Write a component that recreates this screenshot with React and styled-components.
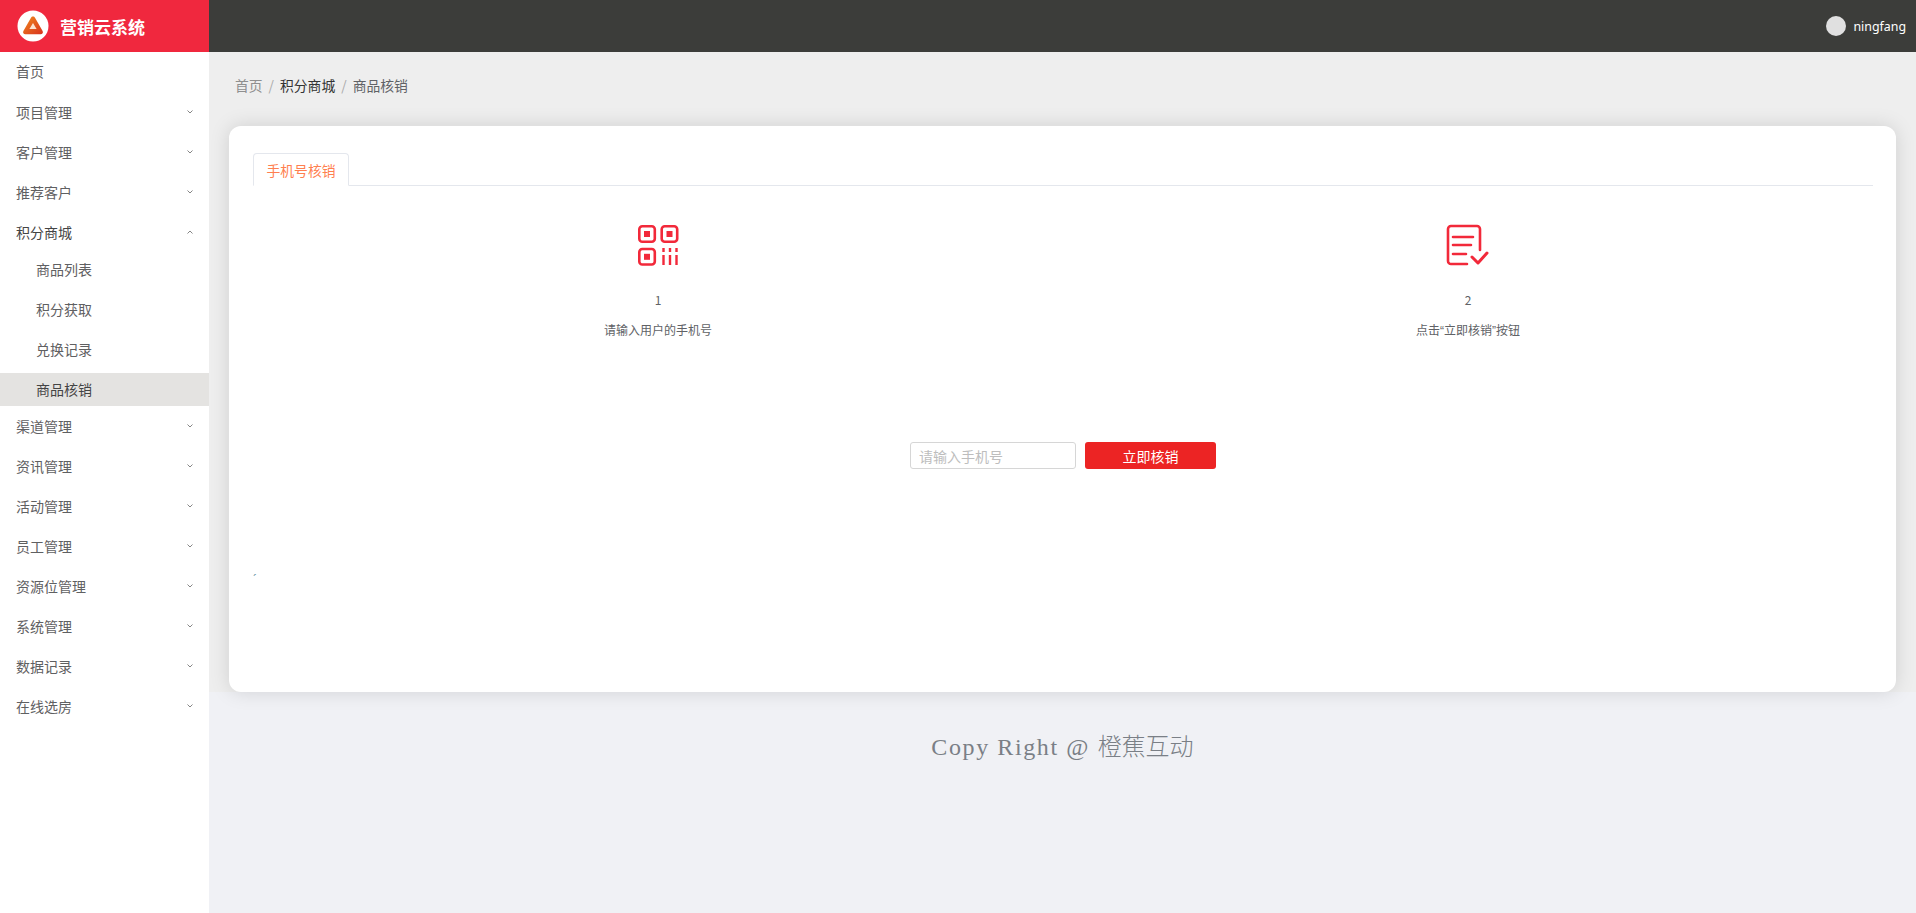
import styled, { createGlobalStyle } from "styled-components"

const GlobalStyle = createGlobalStyle`
    html, body {
        margin: 0;
        padding: 0;
        height: 100%;
        overflow: hidden;
        background: #f0f1f5;
        font-family: "Noto Sans CJK SC", "Noto Sans", sans-serif;
    }
`

const menus = [
    { label: "首页", plain: true },
    { label: "项目管理" },
    { label: "客户管理" },
    { label: "推荐客户" },
    {
        label: "积分商城",
        open: true,
        children: ["商品列表", "积分获取", "兑换记录", "商品核销"],
    },
    { label: "渠道管理" },
    { label: "资讯管理" },
    { label: "活动管理" },
    { label: "员工管理" },
    { label: "资源位管理" },
    { label: "系统管理" },
    { label: "数据记录" },
    { label: "在线选房" },
]

function Chevron({ up }) {
    return (
        <ChevronIcon viewBox="0 0 6 4">
            <polyline points={up ? "0.5,3.5 3,1 5.5,3.5" : "0.5,0.5 3,3 5.5,0.5"} />
        </ChevronIcon>
    )
}

function Logo() {
    return (
        <LogoMark viewBox="0 0 32 32">
            <defs>
                <linearGradient id="logoFill" x1="0" y1="0" x2="1" y2="1">
                    <stop offset="0" stopColor="#f08a1d" />
                    <stop offset="1" stopColor="#d8321f" />
                </linearGradient>
            </defs>
            <circle cx="16" cy="16" r="15.5" fill="#fff" />
            <path
                d="M16 6.5c.9 0 1.6.5 2 1.2l7.6 13.2c.9 1.6-.2 3.4-2 3.4H8.4c-1.8 0-2.9-1.8-2-3.4L14 7.700c.4-.7 1.100-1.200 2-1.200z"
                fill="url(#logoFill)"
            />
            <path d="M16 13l3.600 6h-7.200z" fill="#fbe3cf" />
        </LogoMark>
    )
}

function QrIcon() {
    return (
        <StepIcon viewBox="0 0 41 41">
            <rect x="1.300" y="1.300" width="15.500" height="15.500" rx="3" />
            <rect x="23.700" y="1.300" width="15.500" height="15.500" rx="3" />
            <rect x="1.300" y="24" width="15.500" height="15.500" rx="3" />
            <Solid x="6" y="6" width="6" height="6" />
            <Solid x="28.500" y="6" width="6" height="6" />
            <Solid x="6" y="28.800" width="6" height="6" />
            <BarPath d="M25.500 23v4M25.500 30v10M32 23v4M32 30v10M38.500 23v4M38.500 30v10" />
        </StepIcon>
    )
}

function CheckDocIcon() {
    return (
        <DocIcon viewBox="0 0 41 41">
            <path d="M20 39H4a3 3 0 0 1-3-3V4a3 3 0 0 1 3-3h26a3 3 0 0 1 3 3v21" />
            <path d="M6 12h20M6 20h18M6 29h13" />
            <CheckPath d="M25 32l6 6 9-10" />
        </DocIcon>
    )
}

function App() {
    return (
        <>
            <GlobalStyle />
            <Page>
                <TopBar>
                    <Brand>
                        <Logo />
                        <BrandName>营销云系统</BrandName>
                    </Brand>
                    <User>
                        <Avatar />
                        <UserName>ningfang</UserName>
                    </User>
                </TopBar>
                <Body>
                    <Sidebar>
                        {menus.map((menu) => (
                            <div key={menu.label}>
                                <MenuRow $plain={menu.plain} $open={menu.open}>
                                    {menu.label}
                                    {!menu.plain && <Chevron up={menu.open} />}
                                </MenuRow>
                                {menu.children &&
                                    menu.children.map((child) => (
                                        <SubRow key={child} $active={child === "商品核销"}>
                                            {child}
                                        </SubRow>
                                    ))}
                            </div>
                        ))}
                    </Sidebar>
                    <Main>
                        <Content>
                            <Breadcrumb>
                                <Crumb $color="#8f8f8f">首页</Crumb>
                                <Slash>/</Slash>
                                <Crumb $color="#333">积分商城</Crumb>
                                <Slash>/</Slash>
                                <Crumb $color="#606266">商品核销</Crumb>
                            </Breadcrumb>
                            <Card>
                                <TabBar>
                                    <Tab>手机号核销</Tab>
                                </TabBar>
                                <Steps>
                                    <Step>
                                        <QrIcon />
                                        <StepNum>1</StepNum>
                                        <StepText>请输入用户的手机号</StepText>
                                    </Step>
                                    <Step>
                                        <CheckDocIcon />
                                        <StepNum>2</StepNum>
                                        <StepText>点击“立即核销”按钮</StepText>
                                    </Step>
                                </Steps>
                                <VerifyRow>
                                    <PhoneInput placeholder="请输入手机号" />
                                    <VerifyButton>立即核销</VerifyButton>
                                </VerifyRow>
                                <Tick>´</Tick>
                            </Card>
                        </Content>
                        <Footer>
                            Copy Right @ <FooterCjk>橙蕉互动</FooterCjk>
                        </Footer>
                    </Main>
                </Body>
            </Page>
        </>
    )
}

const Page = styled.div`
    width: 1916px;
    height: 913px;
    display: flex;
    flex-direction: column;
`

const TopBar = styled.header`
    height: 52px;
    flex: none;
    display: flex;
    justify-content: space-between;
    align-items: center;
    background: #3c3d3a;
`

const Brand = styled.div`
    width: 209px;
    height: 100%;
    box-sizing: border-box;
    padding-left: 17px;
    display: flex;
    align-items: center;
    gap: 11px;
    background: #f0283e;
`

const LogoMark = styled.svg`
    width: 32px;
    height: 32px;
    flex: none;
`

const BrandName = styled.span`
    font-size: 17px;
    font-weight: 700;
    color: #fff;
`

const User = styled.div`
    display: flex;
    align-items: center;
    gap: 7px;
    padding-right: 10px;
`

const Avatar = styled.span`
    width: 20px;
    height: 20px;
    border-radius: 50%;
    background: #e0e0e0;
`

const UserName = styled.span`
    font-family: "Noto Sans", sans-serif;
    font-size: 12.4px;
    color: #fff;
`

const Body = styled.div`
    flex: 1;
    display: flex;
    min-height: 0;
`

const Sidebar = styled.nav`
    width: 209px;
    flex: none;
    background: #fff;
`

const MenuRow = styled.div`
    height: 40px;
    box-sizing: border-box;
    padding: ${(props) => (props.$plain ? "0 16px 2px" : "0 16px")};
    display: flex;
    align-items: center;
    justify-content: space-between;
    font-size: 14px;
    color: ${(props) => (props.$open ? "#444" : "#5f6062")};
`

const ChevronIcon = styled.svg`
    width: 6px;
    height: 4px;
    fill: none;
    stroke: #666;
    stroke-width: 0.8;
`

const SubRow = styled.div`
    height: 33px;
    margin-bottom: 7px;
    box-sizing: border-box;
    padding-left: 36px;
    display: flex;
    align-items: center;
    font-size: 14px;
    color: ${(props) => (props.$active ? "#444" : "#5f6062")};
    background: ${(props) => (props.$active ? "#e4e3e1" : "transparent")};

    &:last-child {
        margin: 8px 0 0;
        padding-bottom: 2px;
    }
`

const Main = styled.main`
    flex: 1;
    min-width: 0;
    display: flex;
    flex-direction: column;
`

const Content = styled.section`
    padding: 23px 20px 0;
    background: #eeeeee;
`

const Breadcrumb = styled.div`
    height: 20px;
    margin-bottom: 31px;
    padding-left: 6px;
    display: flex;
    align-items: center;
    font-size: 13.8px;
`

const Crumb = styled.span`
    color: ${(props) => props.$color};
`

const Slash = styled.span`
    margin: 0 6px;
    color: #aaa;
`

const Card = styled.div`
    position: relative;
    height: 566px;
    box-sizing: border-box;
    padding: 27px 23px 0 24px;
    background: #fff;
    border-radius: 12px;
    box-shadow: 0 0 20px rgba(0, 0, 0, 0.13);
`

const TabBar = styled.div`
    height: 33px;
    box-sizing: border-box;
    border-bottom: 1px solid #e4e7ed;
    display: flex;
`

const Tab = styled.div`
    width: 96px;
    height: 33px;
    box-sizing: border-box;
    border: 1px solid #e4e7ed;
    border-bottom-color: #fff;
    border-radius: 4px 4px 0 0;
    display: flex;
    align-items: center;
    justify-content: center;
    padding-top: 1px;
    font-size: 13.8px;
    color: #ff7f50;
`

const Steps = styled.div`
    display: grid;
    grid-template-columns: 1fr 1fr;
    padding-top: 39px;
`

const Step = styled.div`
    display: flex;
    flex-direction: column;
    align-items: center;
`

const StepIcon = styled.svg`
    width: 41px;
    height: 41px;
    fill: none;
    stroke: #f2293a;
    stroke-width: 2.6;
    stroke-linecap: butt;
    stroke-linejoin: round;
    overflow: visible;
`

const DocIcon = styled(StepIcon)`
    margin-left: -2px;
    stroke-linecap: round;
`

const BarPath = styled.path`
    stroke-width: 2.4;
`

const CheckPath = styled.path`
    stroke-width: 3;
`

const Solid = styled.rect`
    fill: #f2293a;
    stroke: none;
`

const StepNum = styled.div`
    margin-top: 24px;
    font-size: 12px;
    line-height: 20px;
    color: #606266;
`

const StepText = styled.div`
    margin-top: 11px;
    font-family: "Liberation Sans", "Noto Sans CJK SC", sans-serif;
    font-size: 12px;
    line-height: 20px;
    color: #606266;
`

const VerifyRow = styled.div`
    margin-top: 101px;
    display: flex;
    justify-content: center;
    gap: 9px;
`

const PhoneInput = styled.input`
    width: 166px;
    height: 27px;
    box-sizing: border-box;
    padding: 0 8px;
    border: 1px solid #d6d6d6;
    border-radius: 3px;
    outline: none;
    font-family: inherit;
    font-size: 14px;

    &::placeholder {
        color: #bdbdbd;
    }
`

const VerifyButton = styled.button`
    width: 131px;
    height: 27px;
    padding: 0;
    border: none;
    border-radius: 3px;
    background: #ec2424;
    color: #fff;
    font-family: inherit;
    font-size: 14px;
`

const Tick = styled.div`
    margin-top: 104px;
    font-family: "Liberation Sans", sans-serif;
    font-size: 12px;
    line-height: 14px;
    color: #5a8f9c;
`

const Footer = styled.footer`
    padding-top: 40px;
    text-align: center;
    font-family: "Liberation Serif", serif;
    font-size: 24px;
    letter-spacing: 1.6px;
    line-height: 26px;
    color: #7a7f86;
`

const FooterCjk = styled.span`
    font-family: "Noto Sans CJK SC", sans-serif;
    font-weight: 300;
    letter-spacing: 0;
`

export default App
